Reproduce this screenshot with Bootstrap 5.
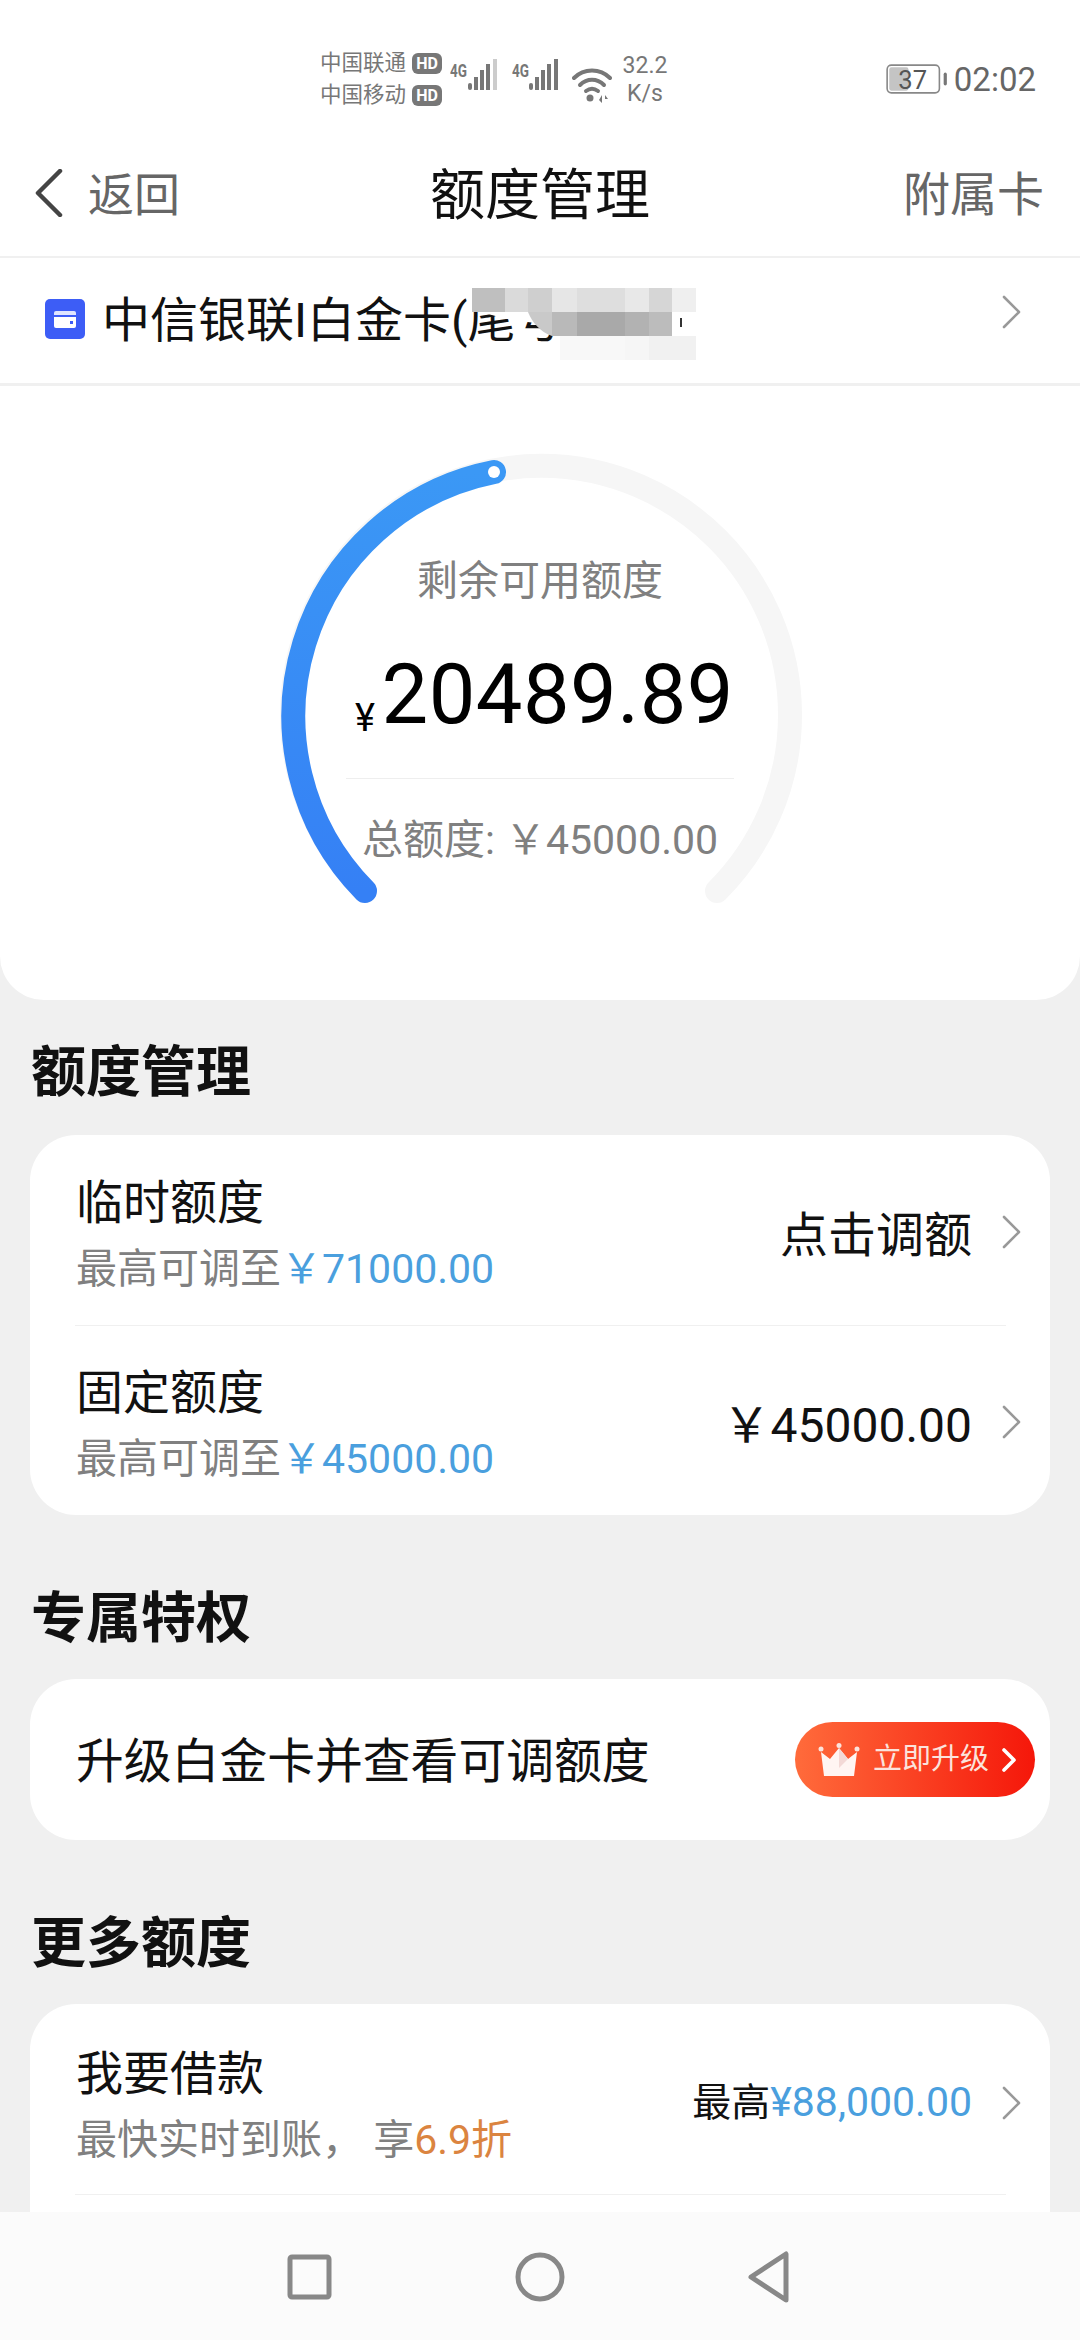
<!DOCTYPE html>
<html lang="zh-CN">
<head>
    <meta charset="UTF-8">
    <meta name="viewport" content="width=device-width, initial-scale=1.0">
    <title>额度管理</title>
    <link href="https://cdn.jsdelivr.net/npm/bootstrap@5.3.3/dist/css/bootstrap.min.css" rel="stylesheet">
    <style>
        html, body { height: 100%; }
        body {
            width: 1080px;
            height: 2340px;
            overflow: hidden;
            background-color: #f0f0f0;
            color: #111;
            font-family: Roboto, "Noto Sans CJK SC", sans-serif;
            position: relative;
        }

        /* Status bar */
        .status-bar { height: 130px; padding: 0 44px 19px 320px; background: #fff; }
        .carrier { font-size: 21.5px; line-height: 32px; color: #777; }
        .hd-tag { display: inline-block; width: 30px; height: 21px; line-height: 21px; margin-left: 6px; border-radius: 6px; background: #777; color: #fff; font-size: 16px; font-weight: 700; text-align: center; vertical-align: 1px; }
        .net-speed { width: 52px; margin-left: 7px; margin-bottom: 3px; font-size: 23px; line-height: 28px; color: #777; text-align: center; }
        .clock { margin-left: 6px; font-size: 33px; color: #666; }
        .batt-group { margin-bottom: 7px; }

        /* Top nav */
        .top-nav { height: 126px; padding: 0 36px 0 35px; background: #fff; position: relative; }
        .back-text { margin-left: 25px; font-size: 46px; color: #666; padding-top: 4px; }
        .top-title { position: absolute; left: 0; right: 0; padding-top: 4px; text-align: center; font-size: 55px; color: #111; line-height: 126px; }
        .top-action { font-size: 47px; color: #666; padding-top: 4px; }

        /* Card selector */
        .card-row { height: 125px; margin-top: 2px; padding: 0 58px 0 45px; background: #fff; position: relative; }
        .card-chip { width: 40px; height: 40px; margin-right: 17px; flex: none; margin-top: -3px; }
        .card-name { font-size: 48px; line-height: 1; white-space: nowrap; margin-top: 1px; }
        .blur-patch { position: absolute; left: 440px; top: 0; }
        .row-arrow { margin-top: -18px; }

        /* Gauge */
        .gauge-panel { height: 614px; margin-top: 3px; background: #fff; border-radius: 0 0 44px 44px; position: relative; }
        .gauge-arc { position: absolute; left: 0; top: 0; }
        .gauge-text { position: relative; padding-top: 167px; text-align: center; }
        .gauge-label { font-size: 41px; line-height: 56px; color: #808080; }
        .gauge-amount { margin-top: 38px; height: 96px; line-height: 96px; font-size: 83px; color: #000; letter-spacing: .5px; padding-left: 9px; }
        .gauge-unit { font-size: 38px; margin-right: 6px; position: relative; top: 8px; }
        .gauge-rule { width: 388px; height: 1px; margin: 35px auto 0; background: #eee; }
        .gauge-total { margin-top: 33px; font-size: 41px; line-height: 56px; color: #808080; }

        /* Sections */
        .block-title { padding: 73px 0 0 31px; height: 164px; font-size: 55px; line-height: 60px; font-weight: 700; color: #111; }
        .block-title.first-title { padding-top: 42px; height: 135px; }
        .quota-box { margin: 0 30px; border: 0; border-radius: 46px; background: #fff; }
        .quota-line { height: 190px; margin: 0 44px 0 45px; padding: 11px 0 0 1px; }
        .quota-line + .quota-line { border-top: 1px solid #f0f0f0; }
        .quota-line.loan-line { padding-top: 16px; }
        .quota-name { font-size: 47px; line-height: 67px; color: #111; }
        .quota-sub { font-size: 41px; line-height: 67px; color: #808080; white-space: nowrap; }
        .quota-blue { color: #4a9fde; }
        .quota-orange { color: #db8440; }
        .quota-val { font-size: 48px; color: #111; margin-right: 30px; white-space: nowrap; }
        .quota-val.loan-val { margin-top: -14px; }
        .quota-val small { font-size: 39px; }
        .quota-val .quota-blue { font-size: 41px; }
        .go-arrow { margin-right: -16px; margin-top: -8px; }
        .upgrade-box { height: 161px; padding: 0 15px 0 46px; }
        .upgrade-text { font-size: 47.8px; color: #111; padding-top: 7px; }
        .upgrade-btn { width: 240px; height: 75px; border-radius: 38px; background: linear-gradient(90deg, #ff6b3b, #f5170a); color: #fbe3dc; font-size: 29px; padding-left: 23px; }
        .upgrade-btn svg:first-child { margin-right: 13px; }
        .upgrade-btn svg:last-child { margin-left: 13px; }

        /* Android nav bar */
        .sys-nav { position: absolute; left: 0; right: 0; bottom: 0; height: 128px; background: #fbfbfb; }
    </style>
</head>
<body>
    <!-- Status bar -->
    <div class="status-bar d-flex align-items-end">
        <div class="carrier">
            <div>中国联通<span class="hd-tag">HD</span></div>
            <div>中国移动<span class="hd-tag">HD</span></div>
        </div>
        <svg width="122" height="46" viewBox="0 0 122 46" class="ms-2 mb-2">
            <g fill="#777">
                <text x="0" y="20" font-family="Roboto" font-size="19" font-weight="700" textLength="17" lengthAdjust="spacingAndGlyphs">4G</text>
                <rect x="18" y="26" width="4" height="7" rx="2"/><rect x="24" y="20" width="4" height="13"/><rect x="30" y="13" width="4" height="20"/><rect x="36" y="7" width="4" height="26"/>
                <rect x="43" y="2" width="4" height="31" fill="#ccc"/>
                <text x="62" y="20" font-family="Roboto" font-size="19" font-weight="700" textLength="17" lengthAdjust="spacingAndGlyphs">4G</text>
                <rect x="79" y="26" width="4" height="7" rx="2"/><rect x="85" y="20" width="4" height="13"/><rect x="91" y="13" width="4" height="20"/><rect x="97" y="7" width="4" height="26"/><rect x="104" y="2" width="4" height="31"/>
            </g>
        </svg>
        <svg width="40" height="36" viewBox="0 0 40 36" class="mb-2">
            <g fill="none" stroke="#777" stroke-width="4" stroke-linecap="round">
                <path d="M2 11C12 1 28 1 38 11"/><path d="M8 18C15 11 25 11 32 18"/><path d="M14 24C18 21 22 21 26 24"/>
            </g>
            <circle cx="18" cy="31" r="3.5" fill="#777"/>
            <path d="M27 33l3-5v8zM33 28l3 4h-3z" fill="#777"/>
        </svg>
        <div class="net-speed">32.2<br>K/s</div>
        <div class="batt-group ms-auto d-flex align-items-center">
            <svg width="62" height="32" viewBox="0 0 58 30">
                <rect x="1" y="2" width="49" height="26" rx="4" fill="#fff" stroke="#888" stroke-width="1.5"/>
                <rect x="3" y="4" width="18" height="22" rx="2" fill="#c4c4c4"/>
                <text x="25" y="24" font-family="Roboto" font-size="24" fill="#555" text-anchor="middle">37</text>
                <rect x="54" y="9" width="3" height="12" rx="1.5" fill="#777"/>
            </svg>
            <span class="clock">02:02</span>
        </div>
    </div>

    <!-- Top nav -->
    <div class="top-nav d-flex align-items-center">
        <div class="top-title">额度管理</div>
        <svg width="28" height="48" viewBox="0 0 28 48" class="position-relative"><path d="M25 2L3 24l22 22" fill="none" stroke="#444" stroke-width="4.5" stroke-linecap="round" stroke-linejoin="round"/></svg>
        <span class="back-text position-relative">返回</span>
        <span class="top-action ms-auto position-relative">附属卡</span>
    </div>

    <!-- Card selector -->
    <div class="card-row d-flex align-items-center">
        <svg class="card-chip" viewBox="0 0 40 40">
            <rect width="40" height="40" rx="5" fill="#3d5df6"/>
            <path d="M9 14a2 2 0 0 1 2-2h18a2 2 0 0 1 2 2v2H9z" fill="#dfe5ff"/>
            <path d="M9 18h22v9a2 2 0 0 1-2 2H11a2 2 0 0 1-2-2z" fill="#fff"/>
            <rect x="25" y="22" width="3" height="3" fill="#3d5df6"/>
        </svg>
        <span class="card-name">中信银联I白金卡(尾号</span>
        <svg class="blur-patch" width="340" height="125" viewBox="440 258 340 125">
            <ellipse cx="590" cy="300" rx="120" ry="26" fill="#fff"/>
            <rect x="472" y="288" width="33" height="24" fill="#bfbfbf"/>
            <rect x="505" y="288" width="23" height="24" fill="#dadada"/>
            <rect x="528" y="288" width="24" height="24" fill="#cfcfcf"/>
            <rect x="552" y="288" width="25" height="24" fill="#e6e6e6"/>
            <rect x="577" y="288" width="48" height="24" fill="#dedede"/>
            <rect x="625" y="288" width="24" height="24" fill="#e8e8e8"/>
            <rect x="649" y="288" width="23" height="24" fill="#d6d6d6"/>
            <rect x="672" y="288" width="24" height="24" fill="#efefef"/>
            <path d="M528 312H577V336H552C540 332 532 322 528 312Z" fill="#c9c9c9"/>
            <rect x="552" y="312" width="25" height="24" fill="#b9b9b9"/>
            <rect x="577" y="312" width="48" height="24" fill="#a9a9a9"/>
            <rect x="625" y="312" width="24" height="24" fill="#b2b2b2"/>
            <rect x="649" y="312" width="23" height="24" fill="#bcbcbc"/>
            <rect x="672" y="312" width="24" height="24" fill="#fff"/>
            <rect x="680" y="318" width="2" height="9" fill="#333"/>
            <ellipse cx="640" cy="358" rx="100" ry="22" fill="#fff"/>
            <rect x="560" y="336" width="65" height="24" fill="#f8f8f8"/>
            <rect x="625" y="336" width="24" height="24" fill="#f6f6f6"/>
            <rect x="649" y="336" width="47" height="24" fill="#f1f1f1"/>
        </svg>
        <svg class="row-arrow ms-auto" width="20" height="34" viewBox="0 0 20 34"><path d="M2 2l15 15L2 32" fill="none" stroke="#999" stroke-width="2.6" stroke-linecap="round" stroke-linejoin="round"/></svg>
    </div>

    <!-- Gauge -->
    <div class="gauge-panel">
        <svg class="gauge-arc" width="1080" height="614" viewBox="0 386 1080 614">
            <defs>
                <linearGradient id="arcBlue" x1="0" y1="0" x2="0" y2="1">
                    <stop offset="0" stop-color="#3b98f5"/>
                    <stop offset="1" stop-color="#3580f5"/>
                </linearGradient>
            </defs>
            <path d="M365 891A249 249 0 1 1 717 891" fill="none" stroke="#f6f6f6" stroke-width="24" stroke-linecap="round"/>
            <path d="M365 891A249 249 0 0 1 494 472" fill="none" stroke="url(#arcBlue)" stroke-width="24" stroke-linecap="round"/>
            <circle cx="494" cy="472" r="6" fill="#fff"/>
        </svg>
        <div class="gauge-text">
            <div class="gauge-label">剩余可用额度</div>
            <div class="gauge-amount"><span class="gauge-unit">¥</span>20489.89</div>
            <div class="gauge-rule"></div>
            <div class="gauge-total">总额度: ￥45000.00</div>
        </div>
    </div>

    <!-- 额度管理 -->
    <div class="block-title first-title">额度管理</div>
    <div class="card quota-box">
        <div class="quota-line d-flex align-items-center justify-content-between">
            <div>
                <div class="quota-name">临时额度</div>
                <div class="quota-sub">最高可调至<span class="quota-blue">￥71000.00</span></div>
            </div>
            <div class="d-flex align-items-center">
                <span class="quota-val">点击调额</span>
                <svg class="go-arrow" width="20" height="34" viewBox="0 0 20 34"><path d="M2 2l15 15L2 32" fill="none" stroke="#999" stroke-width="2.6" stroke-linecap="round" stroke-linejoin="round"/></svg>
            </div>
        </div>
        <div class="quota-line d-flex align-items-center justify-content-between">
            <div>
                <div class="quota-name">固定额度</div>
                <div class="quota-sub">最高可调至<span class="quota-blue">￥45000.00</span></div>
            </div>
            <div class="d-flex align-items-center">
                <span class="quota-val">￥45000.00</span>
                <svg class="go-arrow" width="20" height="34" viewBox="0 0 20 34"><path d="M2 2l15 15L2 32" fill="none" stroke="#999" stroke-width="2.6" stroke-linecap="round" stroke-linejoin="round"/></svg>
            </div>
        </div>
    </div>

    <!-- 专属特权 -->
    <div class="block-title">专属特权</div>
    <div class="card quota-box upgrade-box d-flex flex-row align-items-center justify-content-between">
        <span class="upgrade-text">升级白金卡并查看可调额度</span>
        <div class="upgrade-btn d-flex align-items-center">
            <svg width="42" height="34" viewBox="0 0 42 34">
                <circle cx="3" cy="6" r="2.5" fill="#fbe3dc"/><circle cx="21" cy="2.5" r="2.5" fill="#fbe3dc"/><circle cx="39" cy="6" r="2.5" fill="#fbe3dc"/>
                <path d="M3 9l9 7 9-11 9 11 9-7-3 24H6z" fill="#fff5f2"/>
                <path d="M21 5l9 11-9 9z" fill="#f3d9d6"/>
            </svg>
            <span>立即升级</span>
            <svg width="14" height="24" viewBox="0 0 14 24"><path d="M2 2l10 10L2 22" fill="none" stroke="#fff" stroke-width="3.6" stroke-linecap="round" stroke-linejoin="round"/></svg>
        </div>
    </div>

    <!-- 更多额度 -->
    <div class="block-title">更多额度</div>
    <div class="card quota-box">
        <div class="quota-line loan-line d-flex align-items-center justify-content-between">
            <div>
                <div class="quota-name">我要借款</div>
                <div class="quota-sub">最快实时到账， 享<span class="quota-orange">6.9折</span></div>
            </div>
            <div class="d-flex align-items-center">
                <span class="quota-val loan-val"><small>最高</small><span class="quota-blue">¥88,000.00</span></span>
                <svg class="go-arrow" width="20" height="34" viewBox="0 0 20 34"><path d="M2 2l15 15L2 32" fill="none" stroke="#999" stroke-width="2.6" stroke-linecap="round" stroke-linejoin="round"/></svg>
            </div>
        </div>
        <div class="quota-line"></div>
    </div>

    <!-- System nav -->
    <div class="sys-nav">
        <svg width="1080" height="128" viewBox="0 2212 1080 128">
            <g fill="none" stroke="#888" stroke-width="5" stroke-linejoin="round">
                <rect x="290" y="2257" width="39" height="40" rx="2"/>
                <circle cx="540" cy="2277" r="22"/>
                <path d="M751 2277L786 2254V2300Z"/>
            </g>
        </svg>
    </div>

    <script src="https://cdn.jsdelivr.net/npm/bootstrap@5.3.3/dist/js/bootstrap.bundle.min.js"></script>
</body>
</html>
